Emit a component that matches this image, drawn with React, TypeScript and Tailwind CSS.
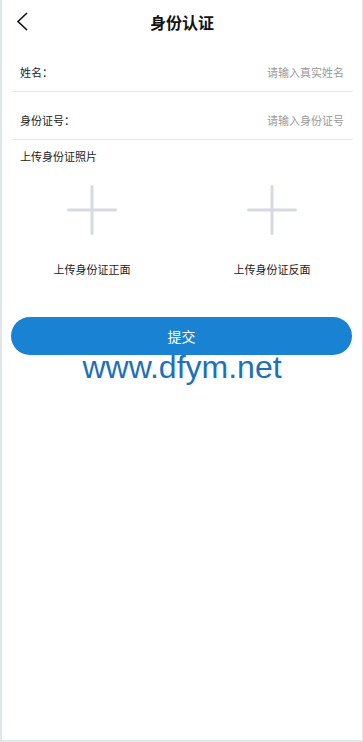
import React from "react";

const cjk = "font-['Noto_Sans_CJK_SC','Noto_Sans',sans-serif]";

function PlusIcon() {
  return (
    <svg width="50" height="50" viewBox="0 0 50 50" fill="none">
      <path
        d="M25 1.5 V48.5 M1.5 25 H48.5"
        stroke="#d6dae2"
        strokeWidth="3"
        strokeLinecap="round"
      />
    </svg>
  );
}

function FormRow({ label, placeholder }: { label: string; placeholder: string }) {
  return (
    <div className="mx-[9px] mt-[8px] flex h-[40px] items-center justify-between border-b border-[#e8e8e8] px-[9px]">
      <span className="text-[11px] leading-4 text-[#222]">{label}</span>
      <input
        placeholder={placeholder}
        className="w-[160px] bg-transparent text-right text-[11px] leading-4 text-[#333] outline-none placeholder:text-[#9a9a9a]"
      />
    </div>
  );
}

function UploadBox({ text }: { text: string }) {
  return (
    <div className="flex flex-col items-center">
      <PlusIcon />
      <span className="mt-[26px] text-[11px] leading-4 text-[#222]">{text}</span>
    </div>
  );
}

export default function App() {
  return (
    <div className={`h-[742px] w-full bg-[#e2e5ea] pb-[2px] pl-[2px] pr-[1px] ${cjk}`}>
      <div className="h-full bg-white">
        <div className="relative flex h-[44px] items-center justify-center">
          <button className="absolute left-[12px] top-[10px] p-[1px]">
            <svg width="14" height="22" viewBox="0 0 14 22" fill="none">
              <path d="M12 2 L3 10.5 L12 19" stroke="#111" strokeWidth="1.6" />
            </svg>
          </button>
          <h1 className="text-[16px] font-bold leading-5 text-[#111]">身份认证</h1>
        </div>

        <FormRow label="姓名：" placeholder="请输入真实姓名" />
        <FormRow label="身份证号：" placeholder="请输入身份证号" />

        <div className="pl-[18px] pt-[8px] text-[11px] leading-4 text-[#222]">上传身份证照片</div>

        <div className="mt-[21px] grid grid-cols-2">
          <UploadBox text="上传身份证正面" />
          <UploadBox text="上传身份证反面" />
        </div>

        <div className="ml-[9px] mr-[10px] mt-[40px]">
          <button className="flex h-[38px] w-full items-center justify-center rounded-full bg-[#1a82d3] text-[14px] text-white">
            提交
          </button>
        </div>

        <div className="text-center font-['Liberation_Sans',Arial,sans-serif] text-[32px] leading-[24px] text-[#1e70bb]">
          www.dfym.net
        </div>
      </div>
    </div>
  );
}
